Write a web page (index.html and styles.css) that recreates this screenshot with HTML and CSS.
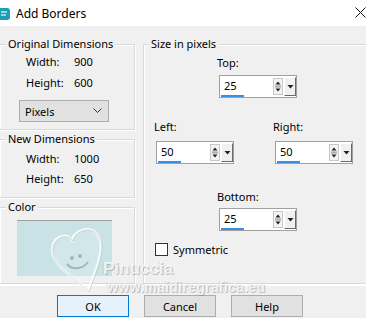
FILE: index.html
```html
<!DOCTYPE html>
<html>
<head>
  <title>Add Borders</title>
  <link rel="stylesheet" href="styles.css">
</head>
<body>
  <div class="window">
    <div class="titlebar">
      <svg class="app-icon" width="11" height="14" viewBox="0 0 11 14">
        <rect x="-3" y="1" width="13" height="12" rx="3" fill="#1c9fb6"/>
        <path d="M1 5h6M1 8h5" stroke="#bfeaf0" stroke-width="1.4"/>
      </svg>
      <span class="title">Add Borders</span>
      <svg class="close" width="11" height="11" viewBox="0 0 11 11">
        <path d="M0.5 0.5L10.5 10.5M10.5 0.5L0.5 10.5" stroke="#111" stroke-width="1"/>
      </svg>
    </div>

    <div class="dialog">
      <div class="left-col">
        <div class="group group-orig">
          <span class="group-title">Original Dimensions</span>
          <div class="dims">
            <span>Width:</span><span>900</span>
            <span>Height:</span><span>600</span>
          </div>
          <div class="select">
            <span>Pixels</span>
            <svg width="9" height="6" viewBox="0 0 9 6"><path d="M0.5 0.5L4.5 4.5L8.5 0.5" fill="none" stroke="#333" stroke-width="1"/></svg>
          </div>
        </div>

        <div class="group group-new">
          <span class="group-title">New Dimensions</span>
          <div class="dims">
            <span>Width:</span><span>1000</span>
            <span>Height:</span><span>650</span>
          </div>
        </div>

        <div class="group group-color">
          <span class="group-title">Color</span>
          <div class="swatch"></div>
        </div>
      </div>

      <div class="group group-size">
        <span class="group-title">Size in pixels</span>

        <div class="field field-top">
          <label>Top:</label>
          <div class="spin">
            <div class="spin-value"><span>25</span><i class="bar"></i></div>
            <svg class="arrows" width="10" height="17" viewBox="0 0 10 17"><rect x="0.5" y="0.5" width="9" height="16" fill="#f4f4f4" stroke="#c8c8c8"/><path d="M2.5 6.5L5 3.5L7.5 6.5Z M2.5 10.5L5 13.5L7.5 10.5Z" fill="#222"/><path d="M2 8H8M2 9H8" stroke="#888" stroke-width="0.8"/></svg>
            <span class="drop"><svg width="7" height="4" viewBox="0 0 7 4"><path d="M0.5 0H6.5L3.5 3.5Z" fill="#222"/></svg></span>
          </div>
        </div>

        <div class="side-row">
          <div class="field field-left">
            <label>Left:</label>
            <div class="spin">
              <div class="spin-value"><span>50</span><i class="bar"></i></div>
              <svg class="arrows" width="10" height="17" viewBox="0 0 10 17"><rect x="0.5" y="0.5" width="9" height="16" fill="#f4f4f4" stroke="#c8c8c8"/><path d="M2.5 6.5L5 3.5L7.5 6.5Z M2.5 10.5L5 13.5L7.5 10.5Z" fill="#222"/><path d="M2 8H8M2 9H8" stroke="#888" stroke-width="0.8"/></svg>
              <span class="drop"><svg width="7" height="4" viewBox="0 0 7 4"><path d="M0.5 0H6.5L3.5 3.5Z" fill="#222"/></svg></span>
            </div>
          </div>
          <div class="field field-right">
            <label>Right:</label>
            <div class="spin">
              <div class="spin-value"><span>50</span><i class="bar"></i></div>
              <svg class="arrows" width="10" height="17" viewBox="0 0 10 17"><rect x="0.5" y="0.5" width="9" height="16" fill="#f4f4f4" stroke="#c8c8c8"/><path d="M2.5 6.5L5 3.5L7.5 6.5Z M2.5 10.5L5 13.5L7.5 10.5Z" fill="#222"/><path d="M2 8H8M2 9H8" stroke="#888" stroke-width="0.8"/></svg>
              <span class="drop"><svg width="7" height="4" viewBox="0 0 7 4"><path d="M0.5 0H6.5L3.5 3.5Z" fill="#222"/></svg></span>
            </div>
          </div>
        </div>

        <div class="field field-bottom">
          <label>Bottom:</label>
          <div class="spin">
            <div class="spin-value"><span>25</span><i class="bar"></i></div>
            <svg class="arrows" width="10" height="17" viewBox="0 0 10 17"><rect x="0.5" y="0.5" width="9" height="16" fill="#f4f4f4" stroke="#c8c8c8"/><path d="M2.5 6.5L5 3.5L7.5 6.5Z M2.5 10.5L5 13.5L7.5 10.5Z" fill="#222"/><path d="M2 8H8M2 9H8" stroke="#888" stroke-width="0.8"/></svg>
            <span class="drop"><svg width="7" height="4" viewBox="0 0 7 4"><path d="M0.5 0H6.5L3.5 3.5Z" fill="#222"/></svg></span>
          </div>
        </div>

        <label class="check"><span class="box"></span>Symmetric</label>
      </div>
    </div>

    <div class="footer">
      <button class="btn btn-default">OK</button>
      <button class="btn">Cancel</button>
      <button class="btn">Help</button>
    </div>

    <!-- watermark from the tutorial site -->
    <div class="watermark">
      <svg class="heart" width="60" height="70" viewBox="48 226 60 70">
        <path d="M88 291C72 276 51 264 52 249C53 236 66 232 72 240C75 229 91 225 98 235C105 246 99 262 88 291Z" fill="rgba(255,255,255,0.18)" stroke="rgba(255,255,255,0.8)" stroke-width="2.5"/>
        <path d="M88 291C72 276 51 264 52 249C53 236 66 232 72 240C75 229 91 225 98 235C105 246 99 262 88 291Z" fill="none" stroke="rgba(120,150,155,0.35)" stroke-width="1" transform="translate(1 1)"/>
        <circle cx="72" cy="258" r="2" fill="rgba(110,150,155,0.55)"/>
        <circle cx="80" cy="256" r="2" fill="rgba(110,150,155,0.55)"/>
        <path d="M67 264C72 270 82 270 88 262" fill="none" stroke="rgba(110,150,155,0.55)" stroke-width="2"/>
      </svg>
      <span class="wm-name">Pinuccia</span>
      <span class="wm-url">www.maidiregrafica.eu</span>
    </div>
  </div>
</body>
</html>
```

FILE: styles.css
```css
/* classic win32 dialog */
body {
  margin: 0;
  padding: 0;
  background-color: #f0f0f0;
  font-family: 'Noto Sans', sans-serif;
  font-size: 11px;
  color: #000;
}

.window {
  position: relative;
  width: 366px;
  height: 318px;
  overflow: hidden;
  background-color: #f0f0f0;
}

.titlebar {
  display: flex;
  align-items: center;
  height: 26px;
  background-color: white;
}

.app-icon {
  margin-top: 1px;
}

.title {
  margin-left: 5px;
  font-size: 12px;
}

.close {
  margin-left: auto;
  margin-right: 0;
  margin-top: -2px;
}

.dialog {
  display: flex;
  height: 258px;
}

.left-col {
  width: 135px;
  flex: none;
}

.group {
  box-sizing: border-box;
  border: 1px solid #d9d9d9;
  box-shadow: inset 1px 1px 0 #fff, 1px 1px 0 #fff;
}

.group-title {
  display: block;
  width: max-content;
  margin: -9px 0 0 6px;
  padding: 0 2px;
  line-height: 16px;
  background-color: #f0f0f0;
}

.group-orig {
  margin: 18px 0 0 -1px;
  height: 86px;
}

.group-new {
  margin: 9px 0 0 -1px;
  height: 59px;
}

.group-color {
  margin: 9px 0 0 -1px;
  height: 77px;
}

.dims {
  display: grid;
  grid-template-columns: 48px auto;
  row-gap: 5px;
  line-height: 16px;
  padding-left: 26px;
  margin-top: 2px;
}

.group-new .dims {
  margin-top: 4px;
  row-gap: 4px;
}

.select {
  box-sizing: border-box;
  display: flex;
  align-items: center;
  justify-content: space-between;
  width: 90px;
  height: 22px;
  margin: 9px 0 0 19px;
  padding: 0 6px 0 5px;
  border: 1px solid #adadad;
  background-color: #e1e1e1;
}

.swatch {
  width: 95px;
  height: 56px;
  margin: 5px 0 0 17px;
  box-sizing: border-box;
  border-top: 1px solid #a0a0a0;
  background-color: #c8e2e5;
}

.group-size {
  flex: none;
  width: 240px;
  height: 240px;
  margin: 18px 0 0 8px;
}

.group-size .group-title {
  margin-left: 5px;
}

.field label {
  display: block;
  line-height: 16px;
  margin-left: -2px;
}

.field-top {
  margin: 3px 0 0 75px;
}

.field-top .spin {
  margin-top: 4px;
}

.side-row {
  display: flex;
  gap: 41px;
  margin: 21px 0 0 12px;
}

.side-row .spin {
  margin-top: 6px;
}

.field-bottom {
  margin: 25px 0 0 75px;
}

.field-bottom .spin {
  margin-top: 3px;
}

.spin {
  box-sizing: border-box;
  display: flex;
  align-items: center;
  width: 78px;
  height: 23px;
  border: 1px solid #a0a0a0;
  background-color: white;
}

.spin-value {
  flex: 1;
  display: flex;
  flex-direction: column;
  padding-left: 4px;
  padding-top: 2px;
  align-self: stretch;
}

.spin-value span {
  line-height: 15px;
}

.bar {
  display: block;
  width: 23px;
  height: 2px;
  margin: 2px 0 0 -3px;
  background-color: #3a8ee6;
}

.arrows {
  margin-right: 1px;
}

.drop {
  display: flex;
  align-items: center;
  justify-content: center;
  align-self: stretch;
  width: 10px;
  margin: 1px 0 1px;
  border-left: 1px solid #fff;
  border-top: 1px solid #fff;
  border-right: 1px solid #696969;
  border-bottom: 1px solid #696969;
  background-color: #f0f0f0;
}

.check {
  display: flex;
  align-items: center;
  margin: 12px 0 0 11px;
  line-height: 13px;
}

.check .box {
  box-sizing: border-box;
  width: 13px;
  height: 13px;
  margin-right: 5px;
  border: 1px solid #333;
  background-color: white;
}

.footer {
  display: flex;
  gap: 15px;
  padding: 10px 0 0 57px;
  border-top: 1px solid #dcdcdc;
  box-shadow: inset 0 1px 0 #fff;
}

.btn {
  box-sizing: border-box;
  width: 72px;
  height: 22px;
  padding: 0;
  font-family: 'Noto Sans', sans-serif;
  font-size: 11px;
  color: #000;
  border: 1px solid #adadad;
  background-color: #e1e1e1;
}

.btn-default {
  border-color: #0078d7;
  background-color: #e5f1fb;
}

.watermark {
  position: absolute;
  left: 48px;
  top: 226px;
  width: 230px;
  height: 70px;
  pointer-events: none;
}

.heart {
  position: absolute;
  left: 0;
  top: 0;
}

.wm-name,
.wm-url {
  position: absolute;
  font-family: 'Liberation Sans', sans-serif;
  font-weight: bold;
  color: rgba(255, 255, 255, 0.8);
  text-shadow: 1px 1px 0 rgba(120, 130, 135, 0.45), -1px 0 0 rgba(160, 170, 175, 0.3);
}

.wm-name {
  left: 55px;
  top: 33px;
  font-size: 17px;
}

.wm-url {
  left: 59px;
  top: 53px;
  font-size: 14px;
  letter-spacing: 0.3px;
}
```
